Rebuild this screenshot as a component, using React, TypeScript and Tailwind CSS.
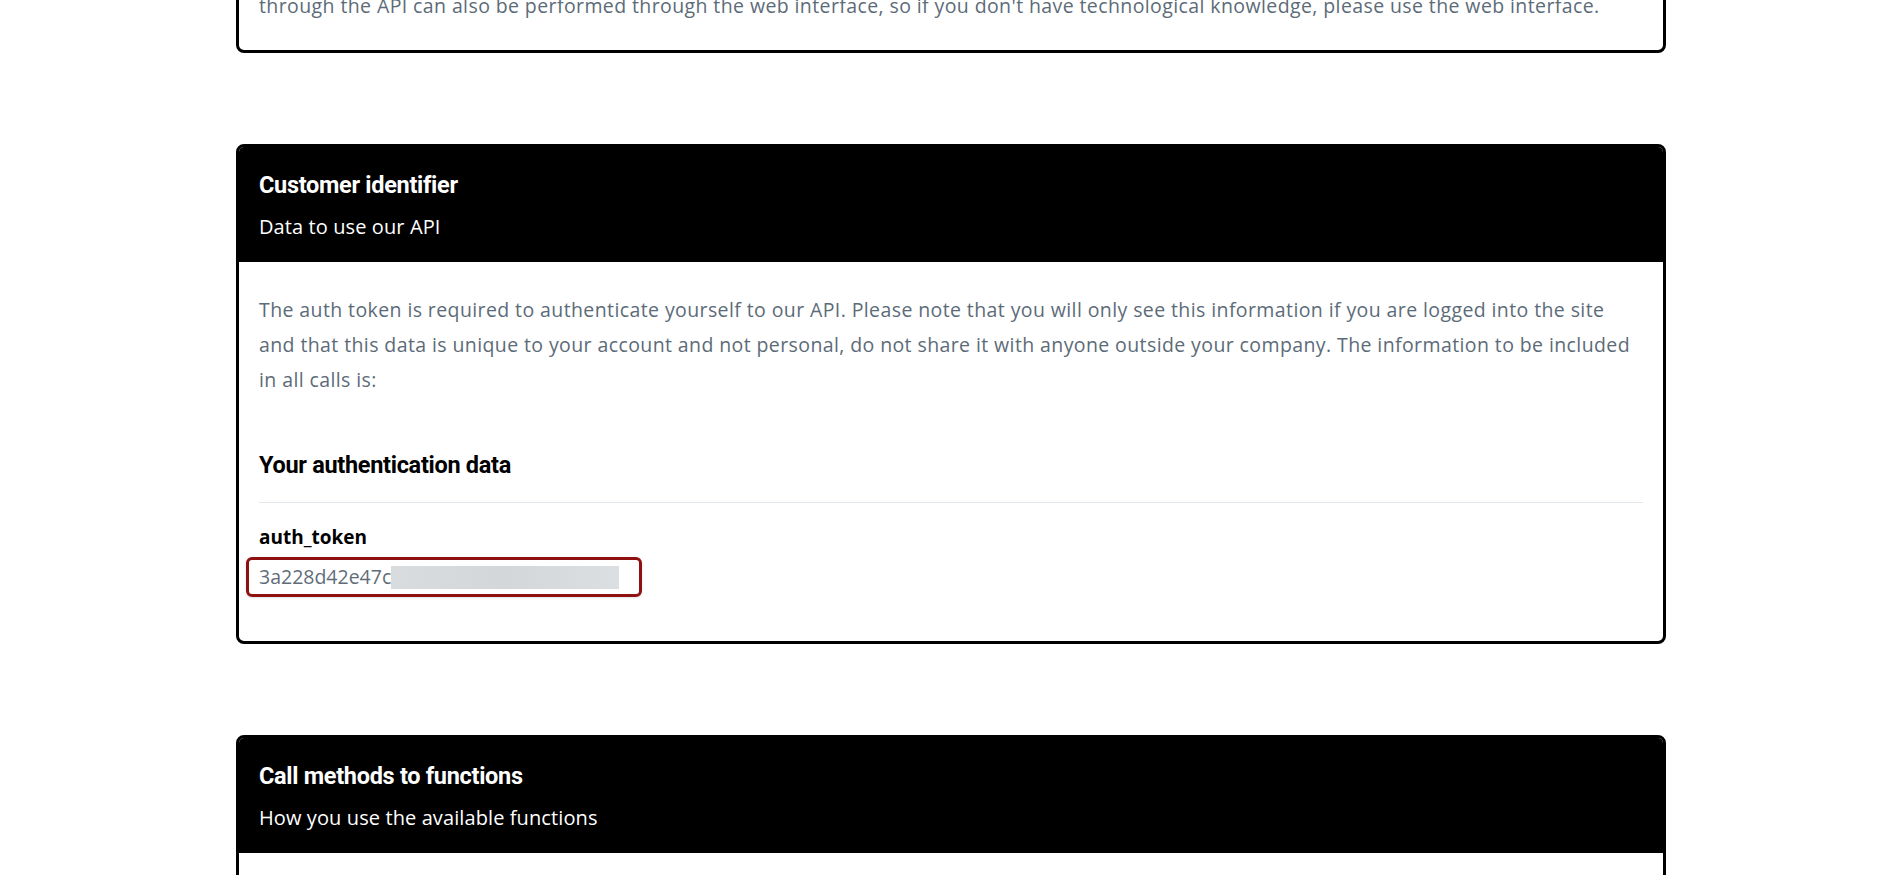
import React from 'react';

const body = { fontFamily: '"Open Sans", "Liberation Sans", sans-serif' };
const head = { fontFamily: 'Roboto, "Liberation Sans", sans-serif' };

const Card: React.FC<{ title: string; subtitle: string; children?: React.ReactNode }> = ({ title, subtitle, children }) => (
  <section className="rounded-lg border-[3px] border-black bg-white overflow-hidden">
    <div className="bg-black px-5 pt-[24px] pb-[21px]">
      <h2 className="text-[23.5px] leading-[28px] font-bold text-white tracking-[-0.3px]" style={head}>{title}</h2>
      <p className="mt-[14px] text-[20px] leading-[28px] text-white tracking-[0.1px]">{subtitle}</p>
    </div>
    {children}
  </section>
);

const Lines: React.FC<{ lines: string[] }> = ({ lines }) => (
  <p className="text-[19.5px] leading-[35px] text-[#5c6b78] tracking-[0.4px]">
    {lines.map((l) => (
      <span key={l} className="block whitespace-nowrap">{l}</span>
    ))}
  </p>
);

const App: React.FC = () => {
  return (
    <div className="min-h-screen bg-white pl-[5px] overflow-hidden" style={body}>
      <div className="mx-auto w-[1430px] pb-10">
        <section className="mt-[-70px] rounded-lg border-[3px] border-black bg-white px-5 pt-5 pb-[27px]">
          <Lines
            lines={[
              'Every operation that can be performed through the API can also be performed in your customer area. Any operation that can be performed',
              "through the API can also be performed through the web interface, so if you don't have technological knowledge, please use the web interface.",
            ]}
          />
        </section>

        <div className="mt-[91px]">
          <Card title="Customer identifier" subtitle="Data to use our API">
            <div className="px-5 pt-[30px] pb-[44px]">
              <Lines
                lines={[
                  'The auth token is required to authenticate yourself to our API. Please note that you will only see this information if you are logged into the site',
                  'and that this data is unique to your account and not personal, do not share it with anyone outside your company. The information to be included',
                  'in all calls is:',
                ]}
              />
              <h3 className="mt-[53px] text-[23.5px] leading-[30px] font-bold text-black tracking-[-0.3px]" style={head}>
                Your authentication data
              </h3>
              <div className="mt-[22px] h-px bg-[#e3e8ec]" />
              <div className="mt-[21px] text-[19px] leading-[26px] font-bold text-black">auth_token</div>
              <div className="mt-[7px] ml-[-13px] flex h-[40px] w-[396px] items-center rounded-md border-[3px] border-[#8e1010] pl-[10px] shadow-sm">
                <span className="text-[19.5px] text-[#5f6d79]">3a228d42e47c</span>
                <span className="h-[23px] w-[228px] bg-gradient-to-r from-[#d9dcdf] via-[#d3d7da] to-[#dcdfe1]" />
              </div>
            </div>
          </Card>
        </div>

        <div className="mt-[91px]">
          <Card title="Call methods to functions" subtitle="How you use the available functions">
            <div className="h-[200px]" />
          </Card>
        </div>
      </div>
    </div>
  );
};

export default App;
